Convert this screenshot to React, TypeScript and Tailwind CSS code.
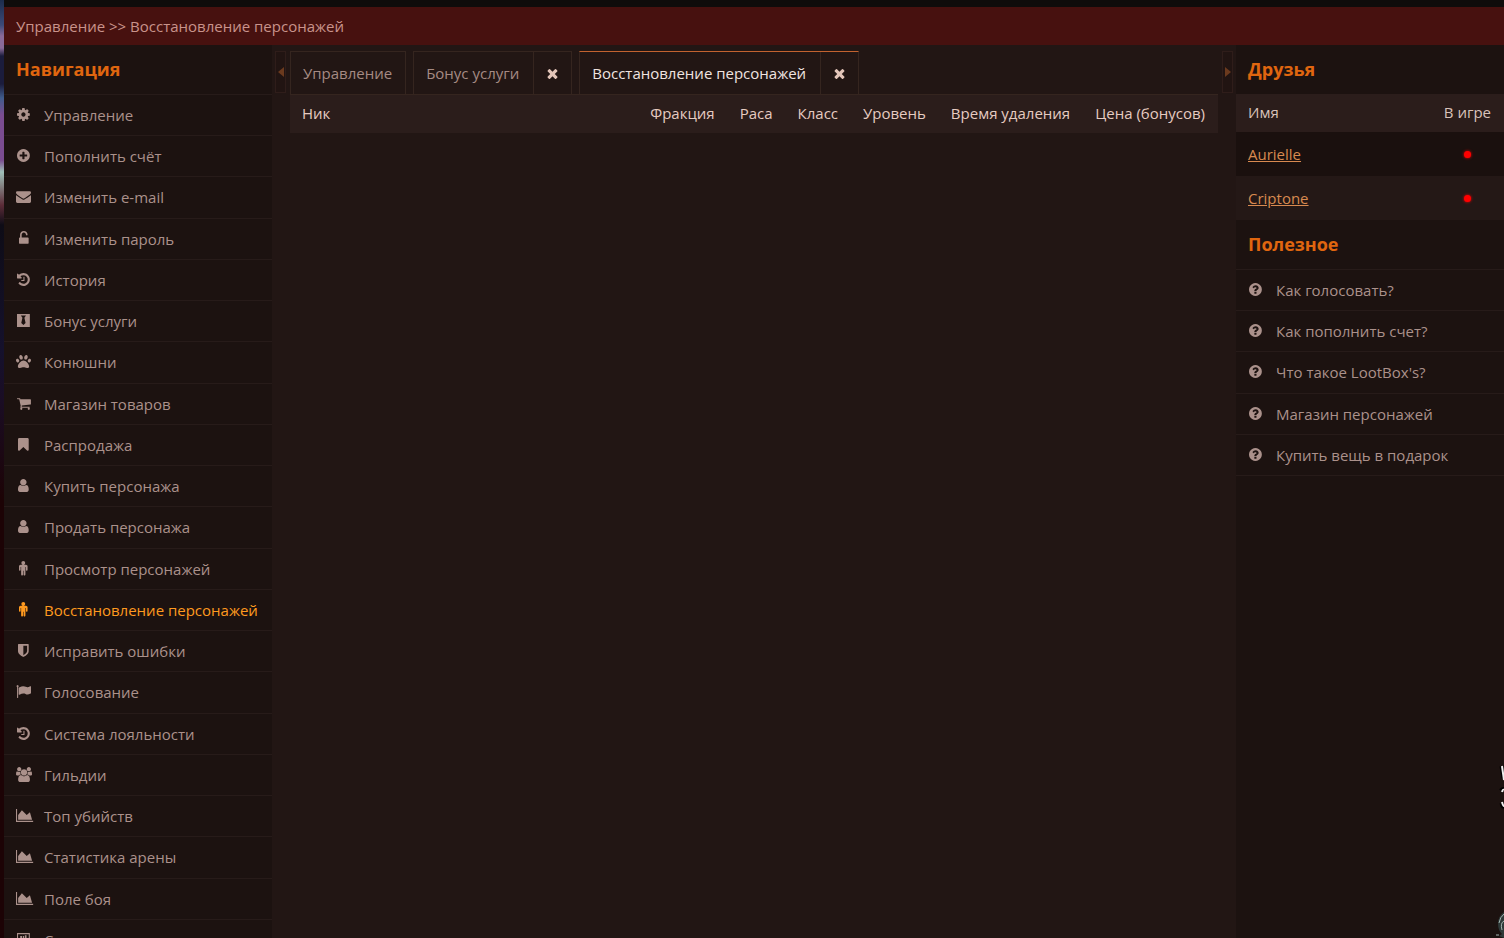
import type { ReactNode } from "react";
import { FaPaw } from "react-icons/fa";

type Glyph = { w: number; d: string };

const CIRCLE =
  "M1536 896q0 209-103 385.5t-279.5 279.5-385.5 103-385.5-103-279.5-279.5-103-385.5 103-385.5 279.5-279.5 385.5-103 385.5 103 279.5 279.5 103 385.5z";

const glyphs = {
  cog: {
    w: 1536,
    d: "M1024 896q0-106-75-181t-181-75-181 75-75 181 75 181 181 75 181-75 75-181zm512-109v222q0 12-8 23t-20 13l-185 28q-19 54-39 91 35 50 107 138 10 12 10 25t-9 23q-27 37-99 108t-94 71q-12 0-26-9l-138-108q-44 23-91 38-16 136-29 186-7 28-36 28h-222q-14 0-24.5-8.5t-11.5-21.5l-28-184q-49-16-90-37l-141 107q-10 9-25 9-14 0-25-11-126-114-165-168-7-10-7-23 0-12 8-23 15-21 51-66.5t54-70.5q-27-50-41-99l-183-27q-13-2-21-12.5t-8-23.5v-222q0-12 8-23t19-13l186-28q14-46 39-92-40-57-107-138-10-12-10-24 0-10 9-23 26-36 98.5-107.5t94.5-71.5q13 0 26 10l138 107q44-23 91-38 16-136 29-186 7-28 36-28h222q14 0 24.5 8.5t11.5 21.5l28 184q49 16 90 37l142-107q9-9 24-9 13 0 25 10 129 119 165 170 7 8 7 22 0 12-8 23-15 21-51 66.5t-54 70.5q26 50 41 98l183 28q13 2 21 12.5t8 23.5z",
  },
  plus: {
    w: 1536,
    d: CIRCLE + "M1216 960v-128q0-26-19-45t-45-19h-256v-256q0-26-19-45t-45-19h-128q-26 0-45 19t-19 45v256h-256q-26 0-45 19t-19 45v128q0 26 19 45t45 19h256v256q0 26 19 45t45 19h128q26 0 45-19t19-45v-256h256q26 0 45-19t19-45z",
  },
  question: {
    w: 1536,
    d: CIRCLE + "M896 1376v-192q0-14-9-23t-23-9h-192q-14 0-23 9t-9 23v192q0 14 9 23t23 9h192q14 0 23-9t9-23zm256-672q0-88-55.5-163t-138.5-116-170-41q-243 0-371 213-15 24 8 42l132 100q7 6 19 6 16 0 25-12 53-68 86-92 34-24 86-24 48 0 85.5 26t37.5 59q0 38-20 61t-68 45q-63 28-115.5 86.5t-52.5 125.5v36q0 14 9 23t23 9h192q14 0 23-9t9-23q0-19 21.5-49.5t54.5-49.5q32-18 49-28.5t46-35 44.5-48 28-60.5 12.5-81z",
  },
  envelope: {
    w: 1792,
    d: "M1792 710v794q0 66-47 113t-113 47h-1472q-66 0-113-47t-47-113v-794q44 49 101 87 362 246 497 345 57 42 92.5 65.5t94.5 48 110 24.5h2q51 0 110-24.5t94.5-48 92.5-65.5q170-123 498-345 57-39 100-87zm0-294q0 79-49 151t-122 123q-376 261-468 325-10 7-42.5 31t-54 38.5-52 32.5-57.5 27-50 9h-2q-23 0-50-9t-57.5-27-52-32.5-54-38.5-42.5-31q-91-64-262-182.5t-205-142.5q-62-42-117-115.5t-55-136.5q0-78 41.5-130t118.5-52h1472q65 0 112.5 47t47.5 113z",
  },
  unlock: {
    w: 1152,
    d: "M1056 768q40 0 68 28t28 68v576q0 40-28 68t-68 28h-960q-40 0-68-28t-28-68v-576q0-40 28-68t68-28h32v-320q0-185 131.5-316.5t316.5-131.5 316.5 131.5 131.5 316.5q0 26-19 45t-45 19h-64q-26 0-45-19t-19-45q0-106-75-181t-181-75-181 75-75 181v320h736z",
  },
  history: {
    w: 1536,
    d: "M1536 896q0 156-61 298t-164 245-245 164-298 61q-172 0-327-72.5t-264-204.5q-7-10-6.5-22.5t8.5-20.5l137-138q10-9 25-9 16 2 23 12 73 95 179 147t225 52q104 0 198.5-40.5t163.5-109.5 109.5-163.5 40.5-198.5-40.5-198.5-109.5-163.5-163.5-109.5-198.5-40.5q-98 0-188 35.5t-160 101.5l137 138q31 30 14 69-17 40-59 40h-448q-26 0-45-19t-19-45v-448q0-42 40-59 39-17 69 14l130 129q107-101 244.5-156.5t284.5-55.5q156 0 298 61t245 164 164 245 61 298zm-640-288v448q0 14-9 23t-23 9h-320q-14 0-23-9t-9-23v-64q0-14 9-23t23-9h224v-352q0-14 9-23t23-9h64q14 0 23 9t9 23z",
  },
  tie: {
    w: 1536,
    d: "M0 128h1536v1536h-1536zM460 310l190 260-140 620 258 250 258-250-140-620 190-260z",
  },
  cart: {
    w: 1664,
    d: "M640 1536q0 52-38 90t-90 38-90-38-38-90 38-90 90-38 90 38 38 90zm896 0q0 52-38 90t-90 38-90-38-38-90 38-90 90-38 90 38 38 90zm128-1088v512q0 24-16.5 42.5t-40.5 21.5l-1044 122q13 60 13 70 0 16-24 64h920q26 0 45 19t19 45-19 45-45 19h-1024q-26 0-45-19t-19-45q0-11 8-31.5t16-36 21.5-40 15.5-29.5l-177-823h-204q-26 0-45-19t-19-45 19-45 45-19h256q16 0 28.5 6.5t19.5 15.5 13 24.5 8 26 5.5 29.5 4.5 26h1201q26 0 45 19t19 45z",
  },
  bookmark: {
    w: 1280,
    d: "M1164 128q23 0 44 9 33 13 52.5 41t19.5 62v1289q0 34-19.5 62t-52.5 41q-19 8-44 8-48 0-83-32l-441-424-441 424q-36 33-83 33-23 0-44-9-33-13-52.5-41t-19.5-62v-1289q0-34 19.5-62t52.5-41q21-9 44-9h1048z",
  },
  user: {
    w: 1280,
    d: "M1280 1399q0 109-62.5 187t-150.5 78h-854q-88 0-150.5-78t-62.5-187q0-85 8.5-160.5t31.5-152 58.5-131 94-89 134.5-34.5q131 128 313 128t313-128q76 0 134.5 34.5t94 89 58.5 131 31.5 152 8.5 160.5zm-256-887q0 159-112.5 271.5t-271.5 112.5-271.5-112.5-112.5-271.5 112.5-271.5 271.5-112.5 271.5 112.5 112.5 271.5z",
  },
  male: {
    w: 1024,
    d: "M1024 640v416q0 40-28 68t-68 28-68-28-28-68v-352h-64v912q0 46-33 79t-79 33-79-33-33-79v-464h-64v464q0 46-33 79t-79 33-79-33-33-79v-912h-64v352q0 40-28 68t-68 28-68-28-28-68v-416q0-80 56-136t136-56h640q80 0 136 56t56 136zM736 224q0 93-65.5 158.5t-158.5 65.5-158.5-65.5-65.5-158.5 65.5-158.5 158.5-65.5 158.5 65.5 65.5 158.5z",
  },
  shield: {
    w: 1280,
    d: "M1088 960v-640h-448v1137q119-63 213-137 235-184 235-360zm192-768v768q0 86-33.5 170.5t-83 150-118 127.5-126.5 103-121 77.5-89.5 49.5-42.5 20q-12 6-26 6t-26-6q-16-7-42.5-20t-89.5-49.5-121-77.5-126.5-103-118-127.5-83-150-33.5-170.5v-768q0-26 19-45t45-19h1152q26 0 45 19t19 45z",
  },
  flag: {
    w: 1792,
    d: "M320 256q0 72-64 110v1266q0 13-9.5 22.5t-22.5 9.5h-64q-13 0-22.5-9.5t-9.5-22.5v-1266q-64-38-64-110 0-53 37.5-90.5t90.5-37.5 90.5 37.5 37.5 90.5zm1472 64v763q0 25-12.5 38.5t-39.5 27.5q-215 116-369 116-61 0-123.5-22t-108.5-48-115.5-48-142.5-22q-192 0-464 146-17 9-33 9-26 0-45-19t-19-45v-742q0-32 31-55 21-14 79-43 236-120 421-120 107 0 200 29t219 88q38 19 88 19 54 0 117.5-21t110-47 88-47 54.5-21q26 0 45 19t19 45z",
  },
  users: {
    w: 1920,
    d: "M593 896q-162 5-265 128h-134q-82 0-138-40.5t-56-118.5q0-353 124-353 6 0 43.5 21t97.5 42.5 119 21.5q67 0 133-23-5 37-5 66 0 139 81 256zm1071 637q0 120-73 189.5t-194 69.5h-874q-121 0-194-69.5t-73-189.5q0-53 3.5-103.5t14-109 26.5-108.5 43-97.5 62-81 85.5-53.5 111.5-20q10 0 43 21.5t73 48 107 48 135 21.5 135-21.5 107-48 73-48 43-21.5q61 0 111.5 20t85.5 53.5 62 81 43 97.5 26.5 108.5 14 109 3.5 103.5zm-1024-1277q0 106-75 181t-181 75-181-75-75-181 75-181 181-75 181 75 75 181zm704 384q0 159-112.5 271.5t-271.5 112.5-271.5-112.5-112.5-271.5 112.5-271.5 271.5-112.5 271.5 112.5 112.5 271.5zm576 225q0 78-56 118.5t-138 40.5h-134q-103-123-265-128 81-117 81-256 0-29-5-66 66 23 133 23 59 0 119-21.5t97.5-42.5 43.5-21q124 0 124 353zm-128-609q0 106-75 181t-181 75-181-75-75-181 75-181 181-75 181 75 75 181z",
  },
  chart: {
    w: 2048,
    d: "M2048 1536v128h-2048v-1536h128v1408h1920zm-384-1024l256 896h-1664v-576l448-576 576 576z",
  },
  board: {
    w: 1536,
    d: "M0 128h1536v1536h-1536zM128 256v1280h1280v-1280zM384 480h220v800h-220zM700 480h150v500h-150zM940 380h200v800h-200z",
  },
  times: {
    w: 1792,
    d: "M1490 1322q0 40-28 68l-136 136q-28 28-68 28t-68-28l-294-294-294 294q-28 28-68 28t-68-28l-136-136q-28-28-28-68t28-68l294-294-294-294q-28-28-28-68t28-68l136-136q28-28 68-28t68 28l294 294 294-294q28-28 68-28t68 28l136 136q28 28 28 68t-28 68l-294 294 294 294q28 28 28 68z",
  },
} satisfies Record<string, Glyph>;

type IconName = keyof typeof glyphs | "paw";

function Icon({ name }: { name: IconName }) {
  if (name === "paw") return <FaPaw className="h-[15px] w-[15px]" aria-hidden />;
  const g = glyphs[name];
  return (
    <svg viewBox={`0 0 ${g.w} 1792`} className="h-[15px] w-auto shrink-0 overflow-visible" fill="currentColor" fillRule="evenodd" aria-hidden>
      <path d={g.d} />
    </svg>
  );
}

const nav: [IconName, string][] = [
  ["cog", "Управление"],
  ["plus", "Пополнить счёт"],
  ["envelope", "Изменить e-mail"],
  ["unlock", "Изменить пароль"],
  ["history", "История"],
  ["tie", "Бонус услуги"],
  ["paw", "Конюшни"],
  ["cart", "Магазин товаров"],
  ["bookmark", "Распродажа"],
  ["user", "Купить персонажа"],
  ["user", "Продать персонажа"],
  ["male", "Просмотр персонажей"],
  ["male", "Восстановление персонажей"],
  ["shield", "Исправить ошибки"],
  ["flag", "Голосование"],
  ["history", "Система лояльности"],
  ["users", "Гильдии"],
  ["chart", "Топ убийств"],
  ["chart", "Статистика арены"],
  ["chart", "Поле боя"],
  ["board", "Сезоны"],
];

const help = ["Как голосовать?", "Как пополнить счет?", "Что такое LootBox's?", "Магазин персонажей", "Купить вещь в подарок"];
const friends = ["Aurielle", "Criptone"];
const columns = ["Фракция", "Раса", "Класс", "Уровень", "Время удаления", "Цена (бонусов)"];

function Title({ children }: { children: ReactNode }) {
  return <h2 className="px-3 pt-3 pb-[13px] text-lg leading-6 font-bold text-[#e0660f]">{children}</h2>;
}

function Menu({ items, active }: { items: [IconName, string][]; active?: string }) {
  return (
    <ul className="border-t border-[#271b19]">
      {items.map(([icon, label]) => (
        <li key={label} className="border-b border-[#271b19] nth-[4n+3]:pb-px">
          <a
            href="#"
            aria-current={label === active ? "page" : undefined}
            className={`flex items-center px-3 py-[10px] whitespace-nowrap ${label === active ? "text-[#ff9a1f]" : "text-[#ab918b]"}`}
          >
            <span className="flex h-5 w-[15px] [justify-content:safe_center] pt-[2px]">
              <Icon name={icon} />
            </span>
            <span className="ml-[13px]">{label}</span>
          </a>
        </li>
      ))}
    </ul>
  );
}

function Tab({ label, active, closable }: { label: string; active?: boolean; closable?: boolean }) {
  return (
    <div
      className={`flex border-x border-t border-x-[#35251f] ${active ? "border-t-[#c2622f] text-[#f0e4e0]" : "border-t-[#35251f] text-[#a58a83]"}`}
    >
      <button type="button" role="tab" aria-selected={!!active} className={`py-[11px] pl-3 ${closable ? "pr-[14px]" : "pr-[13px]"}`}>
        {label}
      </button>
      {closable && (
        <button type="button" aria-label={`Закрыть ${label}`} className="flex w-[38px] items-center justify-center border-l border-[#35251f] text-[#e3c5b9]">
          <Icon name="times" />
        </button>
      )}
    </div>
  );
}

function Handle({ side }: { side: "left" | "right" }) {
  return (
    <button
      type="button"
      aria-label={side === "left" ? "Свернуть навигацию" : "Свернуть панель"}
      className="mt-[6px] flex h-[42px] w-[11px] shrink-0 items-center justify-center border border-[#2f1d1a] bg-[#211412]"
    >
      <svg viewBox="0 0 6 10" className={`h-[10px] w-[6px] shrink-0 ${side === "right" ? "rotate-180" : ""}`} fill="#6b3a1e" aria-hidden>
        <path d="M6 0v10L0 5z" />
      </svg>
    </button>
  );
}

export default function App() {
  return (
    <div className="relative flex h-screen overflow-hidden bg-[#0f0c0b] font-['Open_Sans','Noto_Sans',sans-serif] text-[15px] leading-5">
      <div className="w-1 shrink-0 bg-[linear-gradient(to_bottom,#1c2c4c_0px,#3c4a78_25px,#8a6a98_36px,#8a6a98_48px,#1b1c3c_56px,#1b1c3c_84px,#405c8c_98px,#7a4c90_115px,#7a4c90_160px,#a0c0b8_172px,#5c2c38_205px,#0e0c16_225px,#15112c_350px,#1a0d24_400px,#1c0305_500px,#1c0305_100%)]" />
      <div className="flex min-w-0 flex-1 flex-col pt-[7px]">
        <header className="bg-[#47110f] px-3 py-[9px] text-[#c9938b]">Управление &gt;&gt; Восстановление персонажей</header>
        <div className="flex min-h-0 flex-1">
          <nav className="w-[268px] shrink-0 overflow-hidden bg-[#1c1210]">
            <Title>Навигация</Title>
            <Menu items={nav} active="Восстановление персонажей" />
          </nav>
          <main className="flex min-w-0 flex-1 justify-between bg-[#221614] px-[3px]">
            <Handle side="left" />
            <div className="mx-1 min-w-0 flex-1 pt-[6px]">
              <div role="tablist" className="flex gap-[7px]">
                <Tab label="Управление" />
                <Tab label="Бонус услуги" closable />
                <Tab label="Восстановление персонажей" active closable />
              </div>
              <table className="w-full border-t border-[#35251f] bg-[#2b1d1b] text-left whitespace-nowrap text-[#e6cbc1]">
                <thead>
                  <tr>
                    <th className="w-full pt-2 pr-[13px] pb-[10px] pl-3 font-normal">Ник</th>
                    {columns.map((c) => (
                      <th key={c} className="pt-2 pr-[13px] pb-[10px] pl-3 font-normal">{c}</th>
                    ))}
                  </tr>
                </thead>
              </table>
            </div>
            <Handle side="right" />
          </main>
          <aside className="w-[268px] shrink-0 overflow-hidden bg-[#1c1210]">
            <Title>Друзья</Title>
            <table className="w-full text-left whitespace-nowrap">
              <thead className="bg-[#2b1d1b] text-[#d9c2ba]">
                <tr>
                  <th className="w-full px-3 pt-2 pb-[10px] font-normal">Имя</th>
                  <th className="pt-2 pr-[13px] pb-[10px] pl-3 font-normal">В игре</th>
                </tr>
              </thead>
              <tbody>
                {friends.map((f) => (
                  <tr key={f} className="odd:bg-[#1a100e] even:bg-[#241816]">
                    <td className="px-3 py-3">
                      <a href="#" className="text-[#d88a50] underline">{f}</a>
                    </td>
                    <td className="py-3 pr-[13px] pl-3">
                      <span role="img" aria-label="Не в игре" className="mx-auto block size-[7px] rounded-full bg-[#ff0000] shadow-[0_0_3px_#ff0000]" />
                    </td>
                  </tr>
                ))}
              </tbody>
            </table>
            <Title>Полезное</Title>
            <Menu items={help.map((h): [IconName, string] => ["question", h])} />
          </aside>
        </div>
      </div>
      <svg className="absolute right-0 bottom-0 h-[180px] w-[12px]" viewBox="0 0 12 180" fill="none" aria-hidden>
        <path d="M10 8l2 12M9 33q3-3 3 0M10 45q1 4 2 3" stroke="#000" strokeWidth="5" />
        <path d="M10 8l2 14M10 34q1-3 2-2M10 44q1 4 2 4" stroke="#eee" strokeWidth="2" />
        <path d="M12 154q-6 4-6 12 0 6 4 10l-3 2 5 2z" fill="#2f3a39" />
        <path d="M12 156q-4 3-5 9M12 163q-4 2-2 9M4 177h3" stroke="#a3b5b1" />
      </svg>
    </div>
  );
}
